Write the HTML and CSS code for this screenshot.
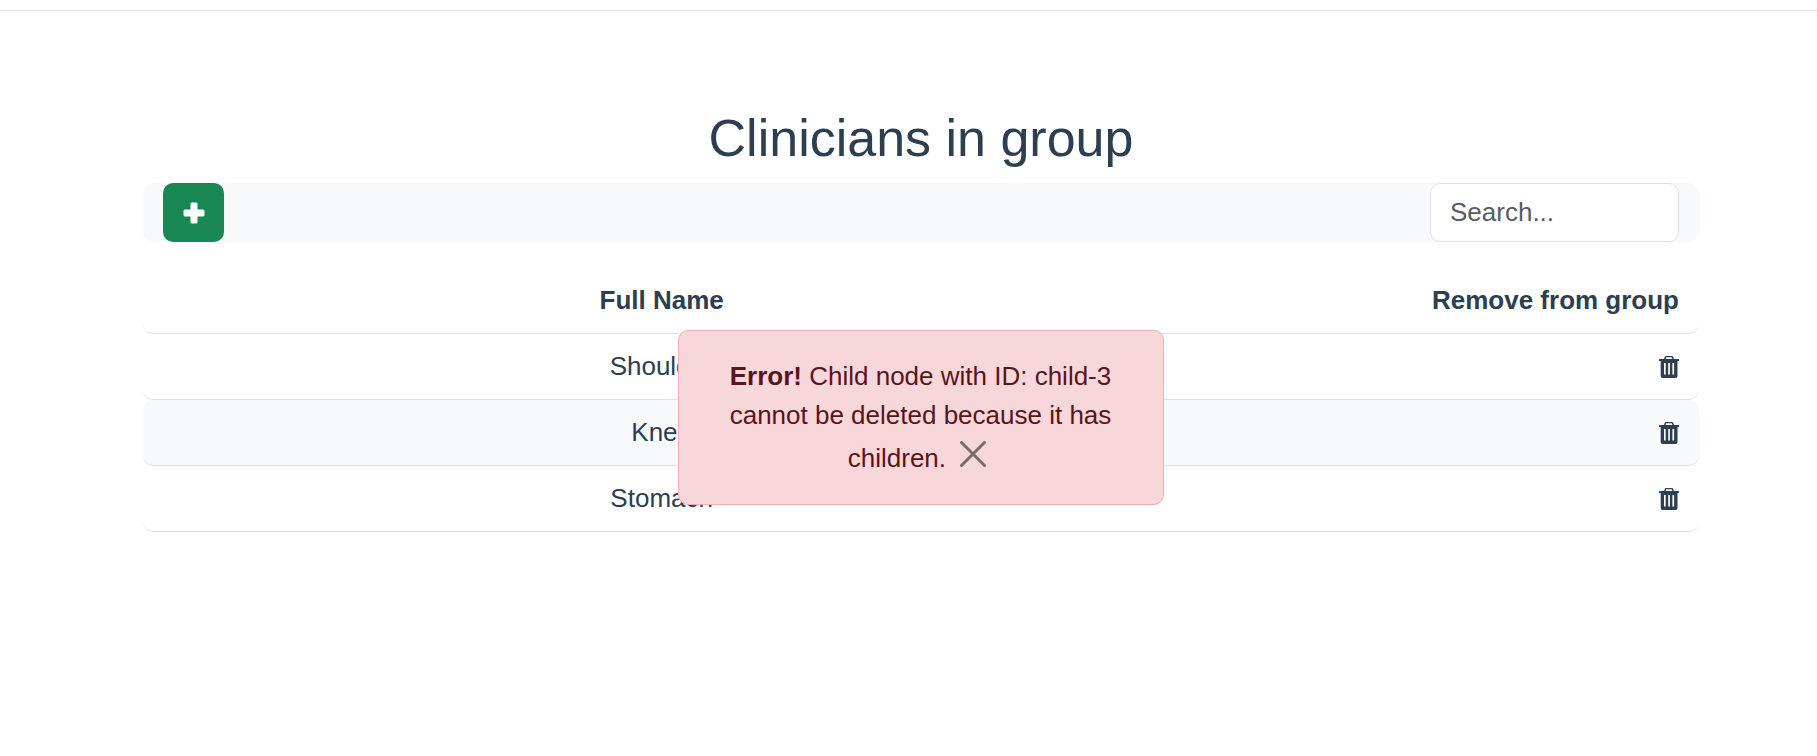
FILE: index.html
```html
<!DOCTYPE html>
<html lang="en">
<head>
<meta charset="utf-8">
<meta name="viewport" content="width=device-width, initial-scale=1">
<title>Clinicians in group</title>
<link rel="stylesheet" href="styles.css">
</head>
<body>
<svg class="sprite" aria-hidden="true">
  <symbol id="trash" viewBox="0 0 21 24">
    <path fill-rule="evenodd" d="M1 4.6Q1 4 1.6 4H6L6.8 1.8Q7.2 1 8 1H14Q14.8 1 15.2 1.8L16 4H20.4Q21 4 21 4.6V5.4Q21 6 20.4 6H19.5V21Q19.5 23 17.5 23H4.7Q2.7 23 2.7 21V6H1.6Q1 6 1 5.4ZM7.6 4H14.4L13.9 2.6Q13.8 2.3 13.4 2.3H8.6Q8.2 2.3 8.1 2.6ZM6 8V19.5H7.7V8ZM10.2 8V19.5H11.9V8ZM14.4 8V19.5H16.1V8Z"/>
  </symbol>
</svg>
<header class="topbar"></header>
<main class="page">
  <h1 class="title">Clinicians in group</h1>
  <div class="toolbar">
    <button class="add" type="button" aria-label="Add clinician">
      <svg viewBox="0 0 22 22" aria-hidden="true"><path d="M9 0.5H13Q14.5 0.5 14.5 2V7.5H20Q21.5 7.5 21.5 9V13Q21.5 14.5 20 14.5H14.5V20Q14.5 21.5 13 21.5H9Q7.5 21.5 7.5 20V14.5H2Q0.5 14.5 0.5 13V9Q0.5 7.5 2 7.5H7.5V2Q7.5 0.5 9 0.5Z"/></svg>
    </button>
    <input class="search" type="search" placeholder="Search..." aria-label="Search">
  </div>
  <table class="list">
    <thead>
      <tr><th class="name" scope="col">Full Name</th><th class="action" scope="col">Remove from group</th></tr>
    </thead>
    <tbody>
      <tr><td class="name">Shoulder</td><td class="action"><button class="remove" type="button" aria-label="Remove Shoulder"><svg aria-hidden="true"><use href="#trash"/></svg></button></td></tr>
      <tr><td class="name">Knee</td><td class="action"><button class="remove" type="button" aria-label="Remove Knee"><svg aria-hidden="true"><use href="#trash"/></svg></button></td></tr>
      <tr><td class="name">Stomach</td><td class="action"><button class="remove" type="button" aria-label="Remove Stomach"><svg aria-hidden="true"><use href="#trash"/></svg></button></td></tr>
    </tbody>
  </table>
  <div class="alert" role="alert">
    <strong>Error!</strong> Child node with ID: child-3 cannot be deleted because it has children.
    <button class="close" type="button" aria-label="Close"><svg viewBox="0 0 26 26" aria-hidden="true"><path d="M1.5 1.5 24.5 24.5M24.5 1.5 1.5 24.5"/></svg></button>
  </div>
</main>
</body>
</html>
```
FILE: styles.css
```css
* {
  box-sizing: border-box;
}

body {
  margin: 0;
  background: #fff;
  color: #2c3e50;
  font: 26px/39px "Liberation Sans", Arial, sans-serif;
}

button,
input {
  font: inherit;
  color: inherit;
}

.sprite {
  position: absolute;
  width: 0;
  height: 0;
}

.topbar {
  height: 11px;
  border-bottom: 1px solid #dee2e6;
}

.page {
  position: relative;
  padding: 96px 118px 26px 143px;
}

.title {
  margin: 0 0 14px;
  font-size: 52px;
  font-weight: 400;
  line-height: 62px;
  text-align: center;
}

.toolbar {
  display: flex;
  justify-content: space-between;
  height: 59px;
  margin-bottom: 26px;
  padding: 0 20px;
  border-radius: 10px;
  background: #f8f9fb;
}

.add {
  display: flex;
  align-items: center;
  justify-content: center;
  width: 61px;
  padding: 0;
  border: 0;
  border-radius: 10px;
  background: #198754;
}

.add svg {
  width: 22px;
  height: 22px;
  fill: #fff;
}

.search {
  width: 249px;
  padding: 0 19px;
  border: 1px solid #dee2e6;
  border-radius: 10px;
  background: #fff;
}

.search::placeholder {
  color: #595c5f;
  opacity: 1;
}

.list {
  width: 100%;
  border-collapse: separate;
  border-spacing: 0;
  table-layout: fixed;
}

.list th,
.list td {
  height: 66px;
  padding: 13px 20px;
  border-bottom: 1px solid #dee2e6;
}

.name {
  width: 66.6667%;
  border-radius: 10px 0 0 10px;
  text-align: center;
}

.action {
  border-radius: 0 10px 10px 0;
  text-align: right;
}

.list tbody tr:nth-child(even) td {
  background: #f8f9fb;
}

.remove {
  display: block;
  margin-left: auto;
  padding: 0;
  border: 0;
  background: none;
  line-height: 0;
}

.remove svg {
  width: 21px;
  height: 24px;
  fill: currentColor;
}

.alert {
  position: absolute;
  top: 319px;
  left: calc(50% + 12px);
  width: 486px;
  padding: 26px;
  border: 1px solid #f1aeb5;
  border-radius: 10px;
  background: #f8d7da;
  color: #58151c;
  text-align: center;
  transform: translateX(-50%);
}

.close {
  padding: 6px 7px;
  border: 0;
  background: none;
  line-height: 0;
}

.close svg {
  width: 26px;
  height: 26px;
  fill: none;
  stroke: #000;
  stroke-width: 3;
  stroke-linecap: round;
  opacity: 0.5;
}
```
